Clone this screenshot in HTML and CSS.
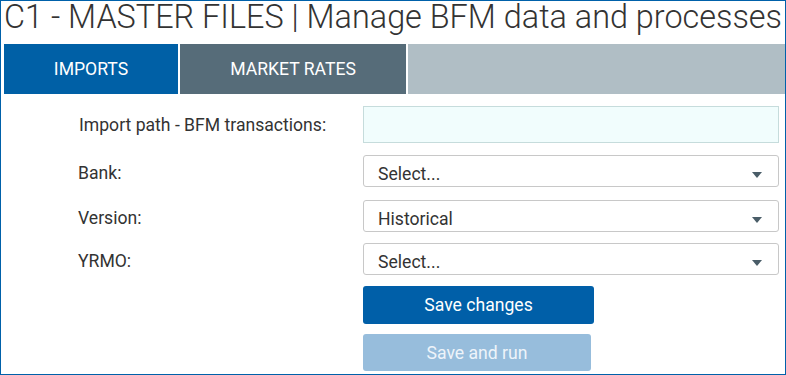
FILE: index.html
```html
<!DOCTYPE html>
<html>
<head>
<title>C1 - MASTER FILES</title>
<link rel="stylesheet" href="styles.css">
</head>
<body>
<div class="frame">
    <h1 class="title">C1 - MASTER FILES | Manage BFM data and processes</h1>
    <div class="tabs">
        <div class="tab active">IMPORTS</div>
        <div class="tab dark">MARKET RATES</div>
        <div class="tab rest"></div>
    </div>
    <div class="form">
        <div class="row row-path">
            <label class="label label-path">Import path - BFM transactions:</label>
            <div class="field"><input class="path" type="text"></div>
        </div>
        <div class="row row-bank">
            <label class="label">Bank:</label>
            <div class="field"><div class="select">Select...<span class="arrow"></span></div></div>
        </div>
        <div class="row row-version">
            <label class="label">Version:</label>
            <div class="field"><div class="select">Historical<span class="arrow"></span></div></div>
        </div>
        <div class="row row-yrmo">
            <label class="label">YRMO:</label>
            <div class="field"><div class="select">Select...<span class="arrow"></span></div></div>
        </div>
        <div class="buttons">
            <button class="btn save">Save changes</button>
            <button class="btn run">Save and run</button>
        </div>
    </div>
</div>
</body>
</html>
```

FILE: styles.css
```css
html, body {
    margin : 0;
    padding : 0;
    background-color : white;
}
body {
    font-family : Roboto, "Liberation Sans", sans-serif;
    color : #333;
}
.frame {
    width : 786px;
    height : 375px;
    box-sizing : border-box;
    border : 1px solid #0061aa;
    padding : 0 0 0 3px;
    overflow : hidden;
}
.title {
    margin : 0;
    font-weight : 300;
    font-size : 32.4px;
    line-height : 32px;
    height : 43px;
    color : #333;
    white-space : nowrap;
}
.tabs {
    display : flex;
    height : 50px;
    gap : 2px;
}
.tab {
    display : flex;
    align-items : center;
    justify-content : center;
    color : white;
    font-size : 17.6px;
}
.tab.active {
    width : 174px;
    background-color : #0060a6;
}
.tab.dark {
    width : 226px;
    background-color : #566c79;
}
.tab.rest {
    flex : 1;
    background-color : #b0bec5;
}
.form {
    padding-top : 12px;
}
.row {
    display : flex;
    align-items : center;
}
.label {
    width : 285px;
    padding-left : 74px;
    padding-top : 4px;
    font-size : 17.6px;
    color : #333;
}
.label-path {
    padding-left : 75px;
    padding-top : 0;
    width : 284px;
}
.field {
    width : 416px;
}
.path {
    display : block;
    box-sizing : border-box;
    width : 416px;
    height : 37px;
    margin : 0;
    border : 1px solid #c6dcdc;
    background-color : #f1fdfd;
}
.select {
    position : relative;
    box-sizing : border-box;
    height : 32px;
    border : 1px solid #c8c8c8;
    border-radius : 3px;
    padding : 8px 0 0 14px;
    font-size : 17.6px;
    line-height : 21px;
    color : #333;
}
.arrow {
    position : absolute;
    right : 16px;
    top : 16px;
    width : 0;
    height : 0;
    border-left : 5px solid transparent;
    border-right : 5px solid transparent;
    border-top : 6px solid #4a5d68;
}
.row-bank { margin-top : 12px; }
.row-version { margin-top : 13px; }
.row-yrmo { margin-top : 11px; }
.buttons {
    display : flex;
    flex-direction : column;
    padding-left : 359px;
    margin-top : 11px;
}
.btn {
    border : none;
    border-radius : 3px;
    font-family : Roboto, "Liberation Sans", sans-serif;
    font-size : 17.6px;
    color : white;
    height : 38px;
    padding : 0;
}
.btn.save {
    width : 231px;
    background-color : #005fa8;
}
.btn.run {
    width : 228px;
    margin-top : 10px;
    height : 37px;
    background-color : #97bddc;
    color : #eef4fa;
}
```
